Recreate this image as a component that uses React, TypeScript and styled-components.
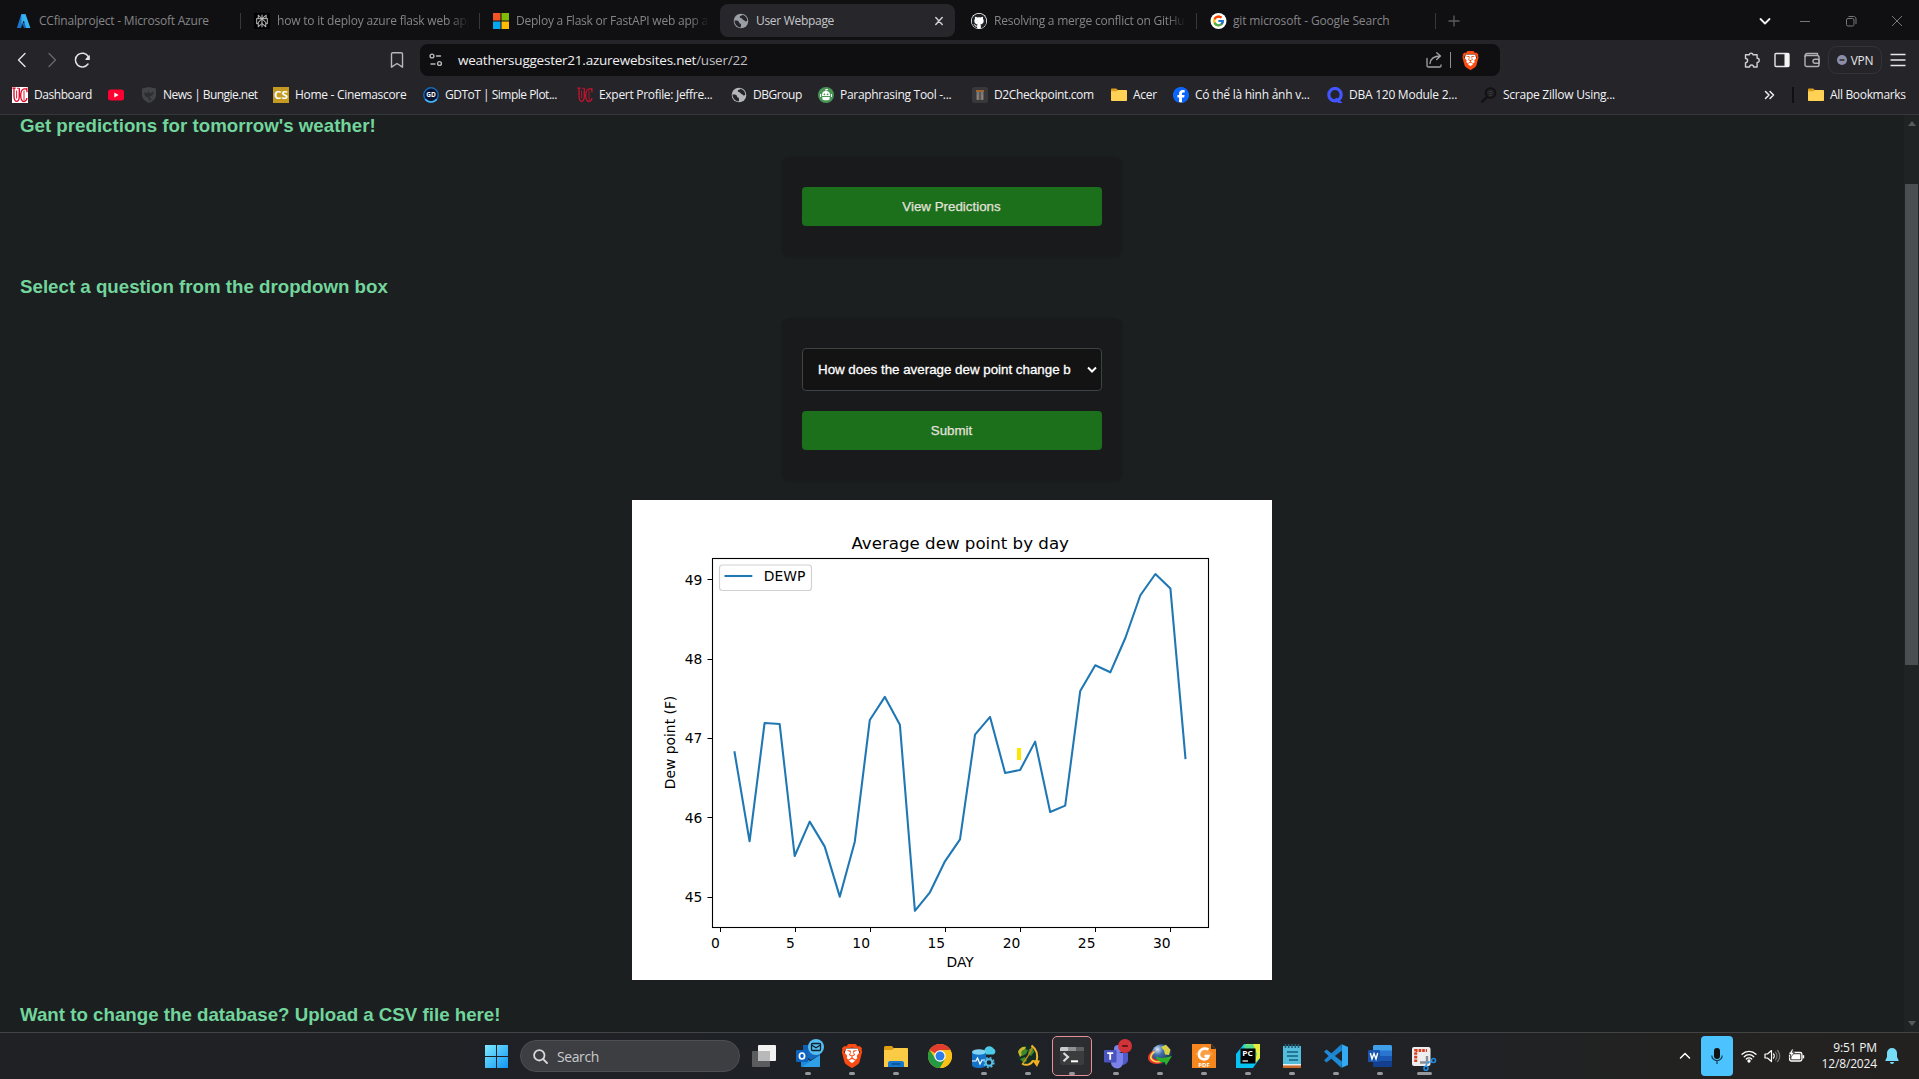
import React from 'react';
import styled, { createGlobalStyle } from 'styled-components';
import { SiBrave, SiGithub, SiFacebook, SiPerplexity } from 'react-icons/si';
import { FcGoogle } from 'react-icons/fc';

const UI = '"Open Sans", "Noto Sans", sans-serif';
const ARIAL = '"Liberation Sans", Arial, sans-serif';
const DEJAVU = '"DejaVu Sans", sans-serif';

const GlobalStyle = createGlobalStyle`
  * { box-sizing: border-box; }
  html, body { margin: 0; padding: 0; background: #1b1f20; overflow: hidden; }
  svg { display: block; flex: none; }
`;

const Screen = styled.div`
  width: 1919px;
  height: 1079px;
  display: flex;
  flex-direction: column;
  overflow: hidden;
  font-family: ${UI};
`;

/* ---------- tab strip ---------- */
const TabStrip = styled.div`
  height: 40px;
  flex: none;
  display: flex;
  align-items: center;
  background: #101012;
  padding: 1px 0 0 3px;
`;
const Tab = styled.div<{ $active?: boolean; $w: number; $pad?: number }>`
  width: ${(p) => p.$w}px;
  height: 33px;
  flex: none;
  display: flex;
  align-items: center;
  gap: 6px;
  padding: 0 10px 0 ${(p) => p.$pad || 13}px;
  border-radius: 8px;
  background: ${(p) => (p.$active ? '#26262b' : 'transparent')};
  color: ${(p) => (p.$active ? '#c6c6ca' : '#858588')};
`;
const TabTitle = styled.div<{ $ls: number; $fade?: boolean }>`
  flex: 1;
  min-width: 0;
  overflow: hidden;
  white-space: nowrap;
  font-size: 12px;
  line-height: 18px;
  letter-spacing: ${(p) => p.$ls}px;
  ${(p) => p.$fade && 'mask-image: linear-gradient(90deg, #000 90%, transparent);'}
`;
const TabLine = styled.div<{ $hidden?: boolean }>`
  width: 1px;
  height: 16px;
  flex: none;
  background: ${(p) => (p.$hidden ? 'transparent' : '#38383c')};
`;
const NewTab = styled.div`
  margin-left: 12px;
  flex: 1;
`;
const WindowButtons = styled.div`
  display: flex;
  align-items: center;
  gap: 14px;
  padding-right: 6px;
`;
const Favicon = styled.div`
  width: 17px;
  height: 16px;
  flex: none;
  display: flex;
  align-items: center;
`;
const CloseTab = styled.div`
  margin-right: 1px;
`;

/* ---------- toolbar ---------- */
const Toolbar = styled.div`
  height: 40px;
  flex: none;
  display: flex;
  align-items: center;
  background: #242429;
`;
const NavButtons = styled.div`
  width: 420px;
  display: flex;
  align-items: center;
  gap: 14px;
  padding: 0 15px 0 14px;
`;
const Grow = styled.div`
  flex: 1;
`;
const UrlBar = styled.div`
  width: 1080px;
  height: 32px;
  display: flex;
  align-items: center;
  border-radius: 8px;
  background: #0f0f11;
  padding: 0 20px 0 8px;
`;
const Url = styled.div`
  margin-left: 14px;
  flex: 1;
  font-size: 13.5px;
  letter-spacing: -0.23px;
  color: #f0f0f2;
  white-space: nowrap;
`;
const UrlPath = styled.span`
  color: #c0c0c4;
`;
const UrlDivider = styled.div`
  width: 1px;
  height: 16px;
  margin: 0 10px 0 7px;
  background: #8f8f92;
`;
const ToolbarRight = styled.div`
  flex: 1;
  display: flex;
  align-items: center;
  justify-content: flex-end;
  padding-right: 13px;
`;
const VpnPill = styled.div`
  width: 54px;
  height: 28px;
  margin: 0 8px;
  display: flex;
  align-items: center;
  justify-content: center;
  gap: 4px;
  border: 1px solid #33333a;
  border-radius: 9px;
  font-size: 12px;
  letter-spacing: -0.35px;
  color: #e8e8ea;
`;
const IconGap = styled.div<{ $w: number }>`
  width: ${(p) => p.$w}px;
  flex: none;
`;

/* ---------- bookmarks ---------- */
const BookmarkBar = styled.div`
  height: 35px;
  flex: none;
  display: flex;
  align-items: center;
  padding: 0 13px 4px 12px;
  background: #242429;
  border-bottom: 1px solid #36363b;
`;
const Bookmark = styled.div<{ $w?: number }>`
  width: ${(p) => (p.$w ? p.$w + 'px' : 'auto')};
  flex: none;
  display: flex;
  align-items: center;
  gap: 6px;
  color: #f2f2f4;
`;
const BookmarkText = styled.div<{ $ls: number }>`
  font-size: 12px;
  line-height: 18px;
  letter-spacing: ${(p) => p.$ls}px;
  white-space: nowrap;
`;
const BarDivider = styled.div`
  width: 2px;
  height: 16px;
  margin: 0 14px 0 17px;
  background: #101012;
`;

/* ---------- page ---------- */
const PageRow = styled.div`
  height: 917px;
  flex: none;
  display: flex;
  overflow: hidden;
`;
const Page = styled.main`
  width: 1904px;
  display: flex;
  flex-direction: column;
  align-items: center;
  background: #1b1f20;
  font-family: ${ARIAL};
`;
const Heading = styled.h3<{ $top: number; $bottom: number }>`
  width: 100%;
  margin: ${(p) => p.$top}px 0 ${(p) => p.$bottom}px;
  padding-left: 20px;
  font-size: 18.72px;
  line-height: 21px;
  font-weight: bold;
  color: #72d59c;
`;
const Card = styled.form<{ $h: number }>`
  width: 340px;
  height: ${(p) => p.$h}px;
  padding: 30px 20px;
  display: flex;
  flex-direction: column;
  gap: 20px;
  border-radius: 8px;
  background: #191a1c;
  box-shadow: 0 1px 3px rgba(0, 0, 0, 0.1);
`;
const GreenButton = styled.button`
  height: 39px;
  flex: none;
  border: 0;
  padding: 0 7px 0 6px;
  border-radius: 4px;
  background: #1c701c;
  color: #e4e2de;
  font: 13.33px ${ARIAL};
  -webkit-text-stroke: 0.25px currentColor;
`;
const SelectBox = styled.div`
  height: 43px;
  flex: none;
  display: flex;
  align-items: center;
  justify-content: space-between;
  padding: 0 3px 0 15px;
  border: 1px solid #3d4245;
  border-radius: 4px;
  background: #131313;
  color: #fff;
  font: 13.33px ${ARIAL};
  -webkit-text-stroke: 0.3px currentColor;
`;
const ChartImage = styled.div`
  width: 640px;
  height: 480px;
  flex: none;
  margin-top: 19px;
  background: #fff;
`;
const ScrollTrack = styled.div`
  width: 15px;
  display: flex;
  flex-direction: column;
  align-items: center;
  background: #202324;
`;
const ScrollThumb = styled.div`
  width: 13px;
  height: 481px;
  margin-top: 58px;
  background: #4a4e50;
`;
const ScrollArrow = styled.div<{ $down?: boolean }>`
  margin-top: ${(p) => (p.$down ? '356px' : '6px')};
  border-left: 4px solid transparent;
  border-right: 4px solid transparent;
  ${(p) => (p.$down ? 'border-top: 5px solid #57595b;' : 'border-bottom: 5px solid #57595b;')}
`;

/* ---------- taskbar ---------- */
const Taskbar = styled.div`
  height: 47px;
  flex: none;
  display: flex;
  border-top: 1px solid #424345;
  padding-left: 485px;
  background: linear-gradient(90deg, #202124 0%, #1e2126 45%, #202226 75%, #232220 90%, #222120 100%);
`;
const StartButton = styled.div`
  width: 35px;
  display: flex;
  align-items: center;
`;
const SearchPill = styled.div`
  width: 220px;
  height: 32px;
  margin-top: 7px;
  display: flex;
  align-items: center;
  gap: 9px;
  padding-left: 12px;
  border-radius: 16px;
  border: 1px solid #4d4e52;
  background: #3d3e42;
  color: #c9cacc;
  font-size: 14px;
  letter-spacing: -0.4px;
`;
const Apps = styled.div`
  display: flex;
  margin-left: 2px;
`;
const App44 = styled.div`
  width: 44px;
  height: 46px;
  display: flex;
  flex-direction: column;
  align-items: center;
`;
const AppTile = styled.div<{ $active?: boolean }>`
  position: relative;
  width: 40px;
  height: 40px;
  margin-top: 3px;
  flex: none;
  display: flex;
  justify-content: center;
  padding-top: ${(p) => (p.$active ? '7px' : '8px')};
  border-radius: 5px;
  border: ${(p) => (p.$active ? '1px solid #e88f9a' : '0')};
  background: ${(p) => (p.$active ? '#2c2d31' : 'transparent')};
`;
const RunningDot = styled.div<{ $wide?: boolean }>`
  width: ${(p) => (p.$wide ? 15 : 6)}px;
  height: 3px;
  margin-top: -4px;
  z-index: 1;
  border-radius: 2px;
  background: #98989b;
`;
const Badge = styled.div`
  position: absolute;
  top: 3px;
  right: 4px;
`;
const Tray = styled.div`
  flex: 1;
  display: flex;
  align-items: center;
  justify-content: flex-end;
  padding-right: 20px;
`;
const MicTile = styled.div`
  width: 32px;
  height: 40px;
  margin: 0 8px 0 10px;
  display: flex;
  align-items: center;
  justify-content: center;
  border-radius: 4px;
  background: #4cc2ff;
`;
const Clock = styled.div`
  width: 64px;
  margin: 0 8px 0 8px;
  text-align: right;
  font-size: 12px;
  line-height: 16px;
  letter-spacing: -0.15px;
  color: #f4f4f4;
  white-space: nowrap;
`;

/* ---------- favicons ---------- */
const AzureIcon = () => (
  <svg width="15" height="16" viewBox="0 0 24 24">
    <path d="M8.300 1h7L8 23H1.400L8.300 1z" fill="#1b74c4" />
    <path d="M9 15h9l3.500 8H13z" fill="#1467b8" />
    <path d="M8.600 1h6.800L23 23h-6.600L12.500 11 9 17z" fill="#37b2f0" />
  </svg>
);
const PerplexityTile = () => (
  <svg width="16" height="16" viewBox="0 0 16 16">
    <rect width="16" height="16" fill="#000" />
    <SiPerplexity x="1.500" y="1.500" size={13} color="#c4c4c4" strokeWidth="0.600" stroke="#c4c4c4" />
  </svg>
);
const MicrosoftIcon = () => (
  <svg width="16" height="16" viewBox="0 0 16 16">
    <path d="M0 0h7.500v7.500H0z" fill="#f35325" />
    <path d="M8.500 0H16v7.500H8.500z" fill="#81bc06" />
    <path d="M0 8.500h7.500V16H0z" fill="#05a6f0" />
    <path d="M8.500 8.500H16V16H8.500z" fill="#ffba08" />
  </svg>
);
const GlobeIcon = ({ color = '#9a9ea5', back = '#26262b' }: { color?: string; back?: string }) => (
  <svg width="16" height="16" viewBox="0 0 16 16">
    <circle cx="8" cy="8" r="7.300" fill={color} />
    <path d="M1.500 7.500c2 0 3.500 0 4.200.9.600.9.200 1.700 1.300 2 1 .200 1 .900 1 2.100 0 1.100-.300 1.800-.6 2C4 14 1.800 11.500 1.500 7.500z" fill={back} />
    <path d="M9.500 1.800C8.800 3 7.200 2.600 6.800 3.800c-.300 1.200.8 1.300 1.700 1.400 1 .1.700 1.500 1.900 1.700 1.300.2 1.300 1.500 2.400 1.500.6 0 1-.300 1.500-.600C14.300 5 12.500 2.600 9.500 1.800z" fill={back} />
  </svg>
);
const GithubIcon = () => (
  <svg width="16" height="16" viewBox="0 0 16 16">
    <circle cx="8" cy="8" r="8" fill="#fff" />
    <SiGithub x="0.600" y="0.600" size={14.800} color="#1d2127" />
  </svg>
);
const GoogleIcon = () => (
  <svg width="17" height="16" viewBox="0 0 16 16">
    <circle cx="8" cy="8" r="8" fill="#fff" />
    <FcGoogle x="1.500" y="1.500" size={13} />
  </svg>
);
const UcIcon = ({ boxed }: { boxed?: boolean }) => (
  <svg width="16" height="16" viewBox="0 0 16 16" fill="none" stroke={boxed ? '#e00122' : '#c5142f'}>
    {boxed && <rect width="16" height="16" fill="#fff" stroke="none" />}
    <path d="M.3 1.200h3.400M2 1.500v7c0 3.500.8 5.800 2.600 5.800C6.600 14.300 7.300 12 7.300 9V2" strokeWidth="1.300" />
    <path d="M5 1.200l3 .3M4.600 3.500v8" strokeWidth=".9" />
    <path d="M15 5.200l-.2-3.500c-1 1-2-.4-3.300.3C9.500 3 8.700 5.500 8.700 8.500c0 3.500 1.300 6 3.300 6 1.600 0 2.600-1.300 2.900-3.500" strokeWidth="1.300" />
    <path d="M12 3.500v9.500" strokeWidth=".9" />
  </svg>
);
const YoutubeIcon = () => (
  <svg width="16" height="16" viewBox="0 0 16 16">
    <rect x="0" y="2.500" width="16" height="11" rx="2.500" fill="#ff0033" />
    <path d="M6.300 5.600L10.600 8l-4.300 2.400z" fill="#fff" />
  </svg>
);
const BungieIcon = () => (
  <svg width="16" height="16" viewBox="0 0 16 16">
    <path d="M1 1.500L8 0l7 1.500v6.800c0 3.800-3.500 6.200-7 7.700-3.500-1.500-7-3.900-7-7.700z" fill="#424347" />
    <path d="M3 5l3 1.500L7.500 4 9 6.500 13 4.500 11.500 8 8 10l2.500 2L8 14l-.5-3L4 9z" fill="#2c2d31" />
  </svg>
);
const CsIcon = () => (
  <svg width="16" height="16" viewBox="0 0 16 16">
    <rect width="16" height="16" fill="#c49a23" />
    <text x="1" y="12.200" fontSize="11" fontWeight="700" fill="#fff" fontFamily={UI} textLength="14" lengthAdjust="spacingAndGlyphs">CS</text>
  </svg>
);
const GdIcon = () => (
  <svg width="16" height="16" viewBox="0 0 16 16">
    <circle cx="8" cy="8" r="7.200" fill="#0a1330" stroke="#1768b5" strokeWidth="1.500" />
    <path d="M2.300 12.300a7.300 7.300 0 0 0 11.400 0" fill="none" stroke="#49b4f5" strokeWidth="1.600" />
    <text x="8" y="10.400" fontSize="6.500" fontWeight="700" textAnchor="middle" fill="#fff" fontFamily={UI}>GD</text>
  </svg>
);
const RobotIcon = () => (
  <svg width="16" height="16" viewBox="0 0 16 16">
    <circle cx="8" cy="8" r="8" fill="#499557" />
    <path d="M8 4V2.500h2" stroke="#fff" strokeWidth="1.100" fill="none" />
    <path d="M4 8a4 4 0 0 1 8 0v1H4zM4.300 10h7.400v1.200a2 2 0 0 1-2 2H6.300a2 2 0 0 1-2-2z" fill="#fff" />
    <path d="M2.600 7v3M13.400 7v3" stroke="#fff" />
    <circle cx="6.400" cy="7.300" r=".9" fill="#499557" />
    <circle cx="9.600" cy="7.300" r=".9" fill="#499557" />
  </svg>
);
const D2Icon = () => (
  <svg width="16" height="16" viewBox="0 0 16 16">
    <rect width="16" height="16" rx="2.500" fill="#38383b" />
    <path d="M4 3h8v2H4z" fill="#a0642f" />
    <path d="M4.500 5h3v8h-3zM8.500 5h3v8h-3z" fill="#77797d" />
    <path d="M5 8h1v4H5zM10 8h1v4h-1z" fill="#b0825c" />
  </svg>
);
const FolderIcon = () => (
  <svg width="16" height="16" viewBox="0 0 16 16">
    <path d="M0 2.500c0-.6.400-1 1-1h4.300l1.500 1.600H14v4H0z" fill="#dd9d1e" />
    <path d="M0 4.200h5.500L7 3.100h8c.6 0 1 .4 1 1v9c0 .6-.4 1-1 1H1c-.6 0-1-.4-1-1z" fill="#ffd256" />
  </svg>
);
const FacebookIcon = () => (
  <svg width="16" height="16" viewBox="0 0 16 16">
    <circle cx="8" cy="8" r="7.500" fill="#fff" />
    <SiFacebook size={16} color="#0866ff" />
  </svg>
);
const QuizletIcon = () => (
  <svg width="16" height="16" viewBox="0 0 16 16">
    <circle cx="8" cy="7.700" r="6.200" fill="none" stroke="#4255ff" strokeWidth="3.200" />
    <path d="M9 10.500l6.800 5.500h-4.600L8 12z" fill="#4255ff" />
  </svg>
);
const ScrapeIcon = () => (
  <svg width="17" height="16" viewBox="0 0 17 16">
    <circle cx="10.500" cy="6" r="5" fill="#1f1f21" stroke="#111113" strokeWidth="1.600" />
    <path d="M7 10L1.500 15.300" stroke="#111113" strokeWidth="2.200" />
    <path d="M8.500 4.500h4M8.500 6.500h4M9 8.500h3" stroke="#39393c" strokeWidth=".9" />
  </svg>
);
const BraveLion = ({ size }: { size: number }) => (
  <svg width={size} height={size} viewBox="0 0 24 24">
    <path d="M6 4.500h12l1.500 6-3 8L12 22l-4.500-3.500-3-8z" fill="#fff" />
    <SiBrave size={24} color="#fb4b14" />
  </svg>
);

/* ---------- taskbar icons, drawn on a 24px grid ---------- */
const A = (p: { children: React.ReactNode; w?: number }) => (
  <svg width={p.w || 24} height="24" viewBox={`0 0 ${p.w || 24} 24`} overflow="visible">{p.children}</svg>
);
const StartIcon = () => (
  <svg width="23" height="23" viewBox="0 0 23 23">
    <defs>
      <linearGradient id="win" x1="0" y1="0" x2="23" y2="23" gradientUnits="userSpaceOnUse">
        <stop stopColor="#7eeaff" /><stop offset="1" stopColor="#0f96f5" />
      </linearGradient>
    </defs>
    <path fill="url(#win)" d="M0 0h11v11H0zM12 0h11v11H12zM0 12h11v11H0zM12 12h11v11H12z" />
  </svg>
);
const TaskViewIcon = () => (
  <A>
    <rect x="6" y="1" width="18" height="16" rx="1" fill="#f2f2f2" />
    <rect x="0" y="7" width="18" height="16" rx="1" fill="#5b5c5e" />
    <path d="M6 7h12v10H6z" fill="#b9b9ba" />
  </A>
);
const OutlookIcon = () => (
  <A>
    <path d="M7 1h10v10H7z" fill="#0f5fb0" />
    <path d="M5 11l9.500 6L24 11v11a1 1 0 0 1-1 1H6a1 1 0 0 1-1-1z" fill="#1b8be0" />
    <path d="M24 11v11a1 1 0 0 1-1 1H6z" fill="#2f9fe8" />
    <path d="M9 6h15v5l-9 5-6-4z" fill="#1469bd" />
    <rect x="0" y="6" width="12" height="12" rx="1" fill="#0d63bd" />
    <ellipse cx="6" cy="12" rx="2.600" ry="3" fill="none" stroke="#fff" strokeWidth="1.700" />
  </A>
);
const MailBadge = () => (
  <svg width="16" height="16" viewBox="0 0 16 16">
    <circle cx="8" cy="8" r="8" fill="#55bdf0" />
    <rect x="3.500" y="4.500" width="9" height="7" rx="1" fill="none" stroke="#11202a" strokeWidth="1.300" />
    <path d="M3.500 6l4.500 2.800L12.500 6" fill="none" stroke="#11202a" strokeWidth="1.300" />
  </svg>
);
const ExplorerIcon = () => (
  <A>
    <path d="M0 3.500C0 2.700.7 2 1.500 2H8l2 2.500V8H0z" fill="#e09c12" />
    <path d="M0 6h8l2-2h13c.6 0 1 .4 1 1v18H0z" fill="#fccb45" />
    <path d="M4 23v-4c0-1 .8-2 2-2h12c1.200 0 2 1 2 2v4z" fill="#1579cf" />
    <path d="M7.500 20h9" stroke="#0b4f92" strokeWidth="1.600" />
  </A>
);
const ChromeIcon = () => (
  <A>
    <circle cx="12" cy="12" r="12" fill="#fbc116" />
    <path d="M12 12L1.600 6A12 12 0 0 1 22.400 6H12z" fill="#e33b2e" />
    <path d="M1.600 6A12 12 0 0 0 12 24l5.200-9-5.200 1-5-2z" fill="#269a43" />
    <path d="M22.400 6H12v12l5.200-3L12 24A12 12 0 0 0 22.400 6z" fill="#fbc116" />
    <circle cx="12" cy="12" r="5.700" fill="#fff" />
    <circle cx="12" cy="12" r="4.500" fill="#2f7de9" />
  </A>
);
const StorageIcon = () => (
  <A>
    <path d="M14 10.500a4.500 4.500 0 0 1 0-7 5 5 0 0 1 7.500 1 3.300 3.300 0 0 1 0 6z" fill="#4ccbe8" />
    <path d="M0 8v13c0 1.700 3 3 7 3s7-1.300 7-3V8z" fill="#1373c8" />
    <ellipse cx="7" cy="8" rx="7" ry="2.800" fill="#7fd4f5" />
    <path d="M0 17h4l1.500-3 2.500 6 2-4h3" fill="none" stroke="#fff" strokeWidth="1.200" />
    <circle cx="17" cy="18.500" r="3.300" fill="#1f2226" stroke="#58c2ee" strokeWidth="2" />
    <circle cx="17" cy="18.500" r="4.900" fill="none" stroke="#58c2ee" strokeWidth="1.500" strokeDasharray="2 1.850" />
  </A>
);
const GlobeYellow = () => (
  <A>
    <circle cx="11" cy="11" r="10" fill="#122c26" />
    <path d="M2 8c1-4 5-6 8-5l-1 2.500-3 1.500 1 3-3 3z" fill="#c9b52c" />
    <path d="M5 8l4-3 3 1-2 4-4 2zM13 5l4-1 1 4-3 4-3-2zM4 15l5-2 2 4-3 2z" fill="#3d8a2a" />
    <path d="M16.500 1.500C15.500 9 11 13 7 19" fill="none" stroke="#c98c16" strokeWidth="1.500" />
    <path d="M15.500 1.500c5.500 4 6.500 10 5 16M6 19.500c4 2.500 9 1.500 11-3" fill="none" stroke="#f0b829" strokeWidth="2" />
    <path d="M16 16l8 .5L21 23z" fill="#f3b01e" />
  </A>
);
const TerminalIcon = () => (
  <A>
    <path d="M0 5a2 2 0 0 1 2-2h20a2 2 0 0 1 2 2v2H0z" fill="#8f9193" />
    <path d="M0 5a2 2 0 0 1 2-2h6v4H0z" fill="#c8c9ca" />
    <path d="M16 3h6a2 2 0 0 1 2 2v2h-8z" fill="#5c5e60" />
    <path d="M0 7h24v12a2 2 0 0 1-2 2H2a2 2 0 0 1-2-2z" fill="#3a3c3e" />
    <path d="M3.500 9l4.500 4-4.500 4.200" fill="none" stroke="#ddd" strokeWidth="2.200" />
    <path d="M11 17.300h7" stroke="#fff" strokeWidth="2" />
  </A>
);
const TeamsIcon = () => (
  <A>
    <circle cx="14" cy="5" r="4" fill="#7b83eb" />
    <path d="M15 9h9v7a5 5 0 0 1-7 4.500z" fill="#5059c9" />
    <path d="M7 9h12v9a6 6 0 0 1-12 1z" fill="#7b83eb" />
    <rect x="0" y="6" width="12.500" height="12.500" rx="1" fill="#4b53bc" />
    <path d="M3.200 9.200h6M6.200 9.200v6.600" stroke="#fff" strokeWidth="1.800" />
  </A>
);
const BusyBadge = () => (
  <svg width="14" height="14" viewBox="0 0 14 14">
    <circle cx="7" cy="7" r="7" fill="#d13438" />
    <path d="M4.200 7h5.600" stroke="#4a1012" strokeWidth="1.600" />
  </svg>
);
const IdmIcon = () => (
  <A>
    <defs>
      <radialGradient id="idm" cx=".3" cy=".25" r=".8">
        <stop stopColor="#dfe9f5" /><stop offset=".35" stopColor="#3f6fae" /><stop offset="1" stopColor="#12283f" />
      </radialGradient>
    </defs>
    <circle cx="13.500" cy="10.500" r="10.200" fill="url(#idm)" />
    <path d="M13 3l5-2.200 4.500 5L21 11l-4-.5-1-4z" fill="#d8d045" />
    <path d="M7 6C1 8-1.500 13 1 17c3 3.300 8 3.500 13 2v-4c-5 1.200-9.500.5-9.500-2.500 0-2.500 1-4.500 2.500-6.500z" fill="#e7382b" />
    <path d="M6.500 7.500c-4 3-5 6.500-2 8.700 2.500 2 7 1.800 9.500.8" fill="none" stroke="#f7e05a" strokeWidth="1.600" />
    <path d="M7.500 12.500c4 2 8 2 16.500-.5L18 21.500l-1.500-3.500c-4 1-7-1-9-5.500z" fill="#2fae2b" />
  </A>
);
const FoxitIcon = () => (
  <A>
    <path d="M0 0h19l5 5v19H0z" fill="#f6871f" />
    <path d="M19 0l5 5h-5z" fill="#2a2b2e" />
    <path d="M12 2l9 8-9 8-9-8z" fill="#fb9f45" />
    <path d="M16.500 5.500c-4-2.500-9.500 0-9.500 5 0 5.500 8.500 6.500 9.500 1.500h-4" fill="none" stroke="#fff" strokeWidth="2.500" />
    <text x="12" y="22.500" fontSize="6" fontWeight="700" textAnchor="middle" fill="#fff" fontFamily={UI}>PDF</text>
  </A>
);
const PycharmIcon = () => (
  <A>
    <path d="M0 10L8 0h16v14l-7 10H0z" fill="#07c3f2" />
    <path d="M10 0h14v14l-5 5z" fill="#e9ec3c" />
    <path d="M7 1l10-1 4 10-3 10z" fill="#57dc8e" />
    <rect x="4.500" y="4.500" width="15" height="15" fill="#000" />
    <text x="6.200" y="12" fontSize="7.500" fontWeight="700" fill="#fff" fontFamily={UI} textLength="10.500" lengthAdjust="spacingAndGlyphs">PC</text>
    <path d="M6.500 17h5.500" stroke="#fff" strokeWidth="1.200" />
  </A>
);
const NotepadIcon = () => (
  <A>
    <path d="M3 2h18v20H3z" fill="#54bddb" />
    <path d="M3 20.500h18V24H3z" fill="#c8692a" />
    <path d="M3 20h18v1.500H3z" fill="#e9eef0" />
    <path d="M5.500 0v4M8.700 0v4M12 0v4M15.300 0v4M18.500 0v4" stroke="#22607a" strokeWidth="1.500" />
    <path d="M7 8h11M7 12h11M9 16h9" stroke="#15607f" strokeWidth="1.400" />
  </A>
);
const VscodeIcon = () => (
  <A>
    <path d="M17.500 0L18 6.500 2.500 18.500 0 16.300z" fill="#1b83cf" />
    <path d="M17.500 24L18 17.500 2.500 5.500 0 7.700z" fill="#1f8ad6" />
    <path d="M17.200 0L24 3v18l-6.800 3c.5-.2.800-.6.800-1.200V1.300c0-.6-.3-1-.8-1.300z" fill="#32a9f2" />
  </A>
);
const WordIcon = () => (
  <A>
    <path d="M6 1h16.500c.8 0 1.500.7 1.500 1.500V7H5V2z" fill="#3f9fe8" />
    <path d="M5 6.500h19V12H5z" fill="#2a76cf" />
    <path d="M5 12h19v5.500H5z" fill="#1a57b5" />
    <path d="M5 17.500h19v4c0 .8-.7 1.500-1.500 1.500H6.500c-.8 0-1.500-.7-1.500-1.500z" fill="#123f8f" />
    <rect x="0" y="6" width="12" height="12" rx="1" fill="#1853ae" />
    <path d="M2.300 9l1.700 6 2-5.500L8 15l1.700-6" fill="none" stroke="#fff" strokeWidth="1.400" />
  </A>
);
const SnipIcon = () => (
  <A>
    <rect x="0" y="3" width="18.500" height="19" rx="2" fill="#eeeef0" />
    <path d="M3.700 18V6.500H15" fill="none" stroke="#d8401c" strokeWidth="3" strokeDasharray="2.600 1" />
    <path d="M15 12v7M8 18.500h9" fill="none" stroke="#8b8e94" strokeWidth="2.400" />
    <circle cx="21.500" cy="16.500" r="2" fill="#1f2226" stroke="#1c8be0" strokeWidth="1.600" />
    <circle cx="14" cy="24.300" r="2" fill="#1f2226" stroke="#1c8be0" strokeWidth="1.600" />
    <path d="M20 17.500l-5 1-1 4" fill="none" stroke="#4d9edb" strokeWidth="1.600" />
  </A>
);

/* ---------- chart ---------- */
const dewPoints = [
  46.826, 45.705, 47.195, 47.183, 45.52, 45.953, 45.638, 45.008, 45.7, 47.233, 47.523, 47.174, 44.83, 45.063, 45.453, 45.73,
  47.048, 47.271, 46.566, 46.603, 46.96, 46.075, 46.154, 47.598, 47.921, 47.833, 48.265, 48.803, 49.071, 48.887, 46.754,
];
const dayX = (d: number) => 87.52 + d * 15.03;
const dewY = (v: number) => 397.3 - (v - 45) * 79.42;

const DewPointChart = () => (
  <svg width="640" height="480" viewBox="0 0 640 480" fontFamily={DEJAVU} fontSize="13.890">
    <text x="328.200" y="48.700" fontSize="16.670" textAnchor="middle">Average dew point by day</text>
    {[0, 5, 10, 15, 20, 25, 30].map((d) => (
      <g key={d}>
        <path d={`M${Math.round(dayX(d)) + 0.5} 427v5`} stroke="#000" />
        <text x={dayX(d) + 0.2} y="448" textAnchor="end">{d}</text>
      </g>
    ))}
    {[45, 46, 47, 48, 49].map((v) => (
      <g key={v}>
        <path d={`M75.500 ${Math.round(dewY(v) - 0.5) + 0.5}h5`} stroke="#000" />
        <text x="70.300" y={dewY(v) + 4.9} textAnchor="end">{v}</text>
      </g>
    ))}
    <text x="328.200" y="466.500" textAnchor="middle">DAY</text>
    <text transform="translate(43 242.500) rotate(-90)" textAnchor="middle">Dew point (F)</text>
    <polyline
      points={dewPoints.map((v, i) => `${dayX(i + 1)},${dewY(v)}`).join(' ')}
      fill="none"
      stroke="#1f77b4"
      strokeWidth="2.080"
      strokeLinejoin="round"
      strokeLinecap="square"
    />
    <rect x="80.500" y="58.500" width="496" height="369" fill="none" stroke="#000" strokeWidth="1.100" />
    <rect x="87.500" y="65" width="92" height="25.500" rx="3" fill="#fff" stroke="#d2d2d2" strokeWidth="1.200" />
    <path d="M92.500 76h27.800" stroke="#1f77b4" strokeWidth="2.080" />
    <text x="131.800" y="81">DEWP</text>
    <rect x="385" y="248" width="4" height="12" fill="#ffe600" />
  </svg>
);

/* ---------- data ---------- */
const tabs = [
  { icon: <AzureIcon />, title: 'CCfinalproject - Microsoft Azure', ls: -0.22, w: 237 },
  { icon: <PerplexityTile />, title: 'how to it deploy azure flask web app', ls: -0.2, w: 238, fade: true },
  { icon: <MicrosoftIcon />, title: 'Deploy a Flask or FastAPI web app a', ls: -0.23, w: 239, fade: true, noLine: true },
  { icon: <GlobeIcon />, title: 'User Webpage', ls: -0.3, w: 235, active: true, noLine: true },
  { icon: <GithubIcon />, title: 'Resolving a merge conflict on GitHub', ls: -0.23, w: 240, pad: 15, fade: true },
  { icon: <GoogleIcon />, title: 'git microsoft - Google Search', ls: -0.15, w: 238 },
];
const bookmarks = [
  { icon: <UcIcon boxed />, text: 'Dashboard', w: 96, ls: -0.45 },
  { icon: <YoutubeIcon />, text: '', w: 33, ls: 0 },
  { icon: <BungieIcon />, text: 'News | Bungie.net', w: 132, ls: -0.55 },
  { icon: <CsIcon />, text: 'Home - Cinemascore', w: 150, ls: -0.3 },
  { icon: <GdIcon />, text: 'GDToT | Simple Plot...', w: 154, ls: -0.5 },
  { icon: <UcIcon />, text: 'Expert Profile: Jeffre...', w: 154, ls: -0.3 },
  { icon: <GlobeIcon color="#b4b6ba" back="#242429" />, text: 'DBGroup', w: 87, ls: -0.45 },
  { icon: <RobotIcon />, text: 'Paraphrasing Tool -...', w: 154, ls: -0.3 },
  { icon: <D2Icon />, text: 'D2Checkpoint.com', w: 139, ls: -0.38 },
  { icon: <FolderIcon />, text: 'Acer', w: 62, ls: -0.3 },
  { icon: <FacebookIcon />, text: 'Có thể là hình ảnh v...', w: 154, ls: -0.25 },
  { icon: <QuizletIcon />, text: 'DBA 120 Module 2...', w: 153, ls: -0.25 },
  { icon: <ScrapeIcon />, text: 'Scrape Zillow Using...', w: 154, ls: -0.25 },
];
const apps = [
  { icon: <TaskViewIcon />, idle: true },
  { icon: <OutlookIcon />, badge: <MailBadge /> },
  { icon: <BraveLion size={24} /> },
  { icon: <ExplorerIcon /> },
  { icon: <ChromeIcon />, idle: true },
  { icon: <StorageIcon /> },
  { icon: <GlobeYellow /> },
  { icon: <TerminalIcon />, active: true },
  { icon: <TeamsIcon />, badge: <BusyBadge /> },
  { icon: <IdmIcon /> },
  { icon: <FoxitIcon /> },
  { icon: <PycharmIcon /> },
  { icon: <NotepadIcon /> },
  { icon: <VscodeIcon /> },
  { icon: <WordIcon /> },
  { icon: <SnipIcon />, wide: true },
] as { icon: React.ReactNode; badge?: React.ReactNode; idle?: boolean; active?: boolean; wide?: boolean }[];

const line = { fill: 'none', strokeLinecap: 'round', strokeLinejoin: 'round' } as const;

export default function App() {
  return (
    <Screen>
      <GlobalStyle />
      <TabStrip>
        {tabs.map((t, i) => (
          <React.Fragment key={i}>
            <Tab $w={t.w} $active={t.active} $pad={t.pad}>
              <Favicon>{t.icon}</Favicon>
              <TabTitle $ls={t.ls} $fade={t.fade}>{t.title}</TabTitle>
              {t.active && (
                <CloseTab>
                  <svg width="10" height="10" viewBox="0 0 10 10" {...line} stroke="#d0d0d4" strokeWidth="1.500">
                    <path d="M1.800 1.500l6.400 7M8.200 1.500l-6.400 7" />
                  </svg>
                </CloseTab>
              )}
            </Tab>
            <TabLine $hidden={t.noLine} />
          </React.Fragment>
        ))}
        <NewTab>
          <svg width="12" height="12" viewBox="0 0 12 12" stroke="#5c5c60" strokeWidth="1.300"><path d="M6 .5v11M.5 6h11" /></svg>
        </NewTab>
        <WindowButtons>
          <svg width="20" height="12" viewBox="0 0 20 12" {...line} stroke="#f2f2f2" strokeWidth="1.800"><path d="M5.500 4l4.500 4.500L14.500 4" /></svg>
          <svg width="32" height="12" viewBox="0 0 32 12" stroke="#77777a"><path d="M11 6.500h10" /></svg>
          <svg width="32" height="12" viewBox="0 0 32 12" fill="none" stroke="#77777a">
            <rect x="11.500" y="3.500" width="7.500" height="7.500" rx="1.500" />
            <path d="M13.500 1.500h5c1.500 0 2.500.8 2.500 2.500v5" />
          </svg>
          <svg width="32" height="12" viewBox="0 0 32 12" stroke="#77777a"><path d="M11 1l10 10M21 1L11 11" /></svg>
        </WindowButtons>
      </TabStrip>

      <Toolbar>
        <NavButtons>
          <svg width="16" height="16" viewBox="0 0 16 16" {...line} stroke="#e4e4e6" strokeWidth="1.400"><path d="M11 1.500L4.500 8l6.500 6.500" /></svg>
          <svg width="16" height="16" viewBox="0 0 16 16" {...line} stroke="#66666b" strokeWidth="1.400"><path d="M5 1.500L11.500 8 5 14.500" /></svg>
          <svg width="17" height="16" viewBox="0 0 17 16" {...line} stroke="#e4e4e6" strokeWidth="1.500">
            <path d="M14.300 4.600A6.900 6.900 0 1 0 14 12" />
            <path d="M15.200 3.800v3.700h-3.200z" fill="#e4e4e6" strokeWidth="1.200" />
          </svg>
          <Grow />
          <svg width="16" height="16" viewBox="0 0 16 16" {...line} stroke="#b8b8bc" strokeWidth="1.400"><path d="M2.500 2a1.300 1.300 0 0 1 1.300-1.300h8.400A1.300 1.300 0 0 1 13.500 2v13.200L8 11.500l-5.500 3.700z" /></svg>
        </NavButtons>
        <UrlBar>
          <svg width="16" height="16" viewBox="0 0 16 16" {...line} stroke="#b8b8bc" strokeWidth="1.400">
            <circle cx="4" cy="4" r="1.900" /><path d="M8.500 4h4M3 12h4" /><circle cx="11.500" cy="11.500" r="1.900" />
          </svg>
          <Url>weathersuggester21.azurewebsites.net<UrlPath>/user/22</UrlPath></Url>
          <svg width="18" height="16" viewBox="0 0 18 16" {...line} stroke="#a4a4a8" strokeWidth="1.300">
            <path d="M2 6.500v7.200a1.300 1.300 0 0 0 1.300 1.300h11.400a1.300 1.300 0 0 0 1.300-1.300v-.7" />
            <path d="M5 11.500c.5-4.500 3.200-7.500 10.500-7.500M11.700.8L15.500 4l-3.800 3.500" />
          </svg>
          <UrlDivider />
          <BraveLion size={19} />
        </UrlBar>
        <ToolbarRight>
          <svg width="16" height="16" viewBox="0 0 16 16" {...line} stroke="#cfcfd2" strokeWidth="1.400">
            <path d="M1.500 2.800h3.700a2 2 0 0 1 3.900 0h4v3.500a2 2 0 0 1 0 4.200v4.500H9.600a2 2 0 0 0-4 0H1.500v-4.300a2.100 2.100 0 0 0 0-4.200z" />
          </svg>
          <IconGap $w={14} />
          <svg width="16" height="16" viewBox="0 0 16 16"><rect x="1" y="1.500" width="14" height="13" rx="1" fill="none" stroke="#e8e8ea" strokeWidth="1.400" /><path d="M10.500 1H15v14h-4.500z" fill="#f4f4f4" /></svg>
          <IconGap $w={14} />
          <svg width="16" height="16" viewBox="0 0 16 16" {...line} stroke="#b0b0b4" strokeWidth="1.400">
            <rect x="1" y="3.500" width="14" height="11" rx="1.800" /><path d="M1 4.500C1 2.500 2 1.500 3.500 1.500h10v2M15 7.200h-4a2 2 0 0 0 0 4h4z" />
          </svg>
          <VpnPill>
            <svg width="10" height="10" viewBox="0 0 10 10"><circle cx="5" cy="5" r="5" fill="#8c8ea8" /><path d="M2.500 5h5" stroke="#28282d" strokeWidth="1.500" /></svg>
            VPN
          </VpnPill>
          <svg width="16" height="16" viewBox="0 0 16 16" stroke="#e8e8ea" strokeWidth="1.300"><path d="M.5 2.500h15M.5 8h15M.5 13.500h15" /></svg>
        </ToolbarRight>
      </Toolbar>

      <BookmarkBar>
        {bookmarks.map((b, i) => (
          <Bookmark key={i} $w={b.w}>
            {b.icon}
            <BookmarkText $ls={b.ls}>{b.text}</BookmarkText>
          </Bookmark>
        ))}
        <Grow />
        <svg width="11" height="10" viewBox="0 0 11 10" {...line} stroke="#f0f0f2" strokeWidth="1.500"><path d="M1.500 1.500L5 5 1.500 8.500M6 1.500L9.500 5 6 8.500" /></svg>
        <BarDivider />
        <Bookmark $w={98}>
          <FolderIcon />
          <BookmarkText $ls={-0.33}>All Bookmarks</BookmarkText>
        </Bookmark>
      </BookmarkBar>

      <PageRow>
        <Page>
          <Heading $top={0} $bottom={21}>Get predictions for tomorrow's weather!</Heading>
          <Card $h={100}><GreenButton type="button">View Predictions</GreenButton></Card>
          <Heading $top={19} $bottom={21}>Select a question from the dropdown box</Heading>
          <Card $h={163}>
            <SelectBox>
              How does the average dew point change b
              <svg width="12" height="10" viewBox="0 0 12 10" fill="none" stroke="#fff" strokeWidth="2"><path d="M2 2.500l4 4 4-4" /></svg>
            </SelectBox>
            <GreenButton type="button">Submit</GreenButton>
          </Card>
          <ChartImage><DewPointChart /></ChartImage>
          <Heading $top={24} $bottom={0}>Want to change the database? Upload a CSV file here!</Heading>
        </Page>
        <ScrollTrack>
          <ScrollArrow />
          <ScrollThumb />
          <ScrollArrow $down />
        </ScrollTrack>
      </PageRow>

      <Taskbar>
        <StartButton><StartIcon /></StartButton>
        <SearchPill>
          <svg width="15" height="15" viewBox="0 0 15 15" {...line} stroke="#d8d8da" strokeWidth="1.800"><circle cx="6.300" cy="6.300" r="5.200" /><path d="M10.200 10.200l3.800 3.800" /></svg>
          Search
        </SearchPill>
        <Apps>
          {apps.map((a, i) => (
            <App44 key={i}>
              <AppTile $active={a.active}>
                {a.icon}
                {a.badge && <Badge>{a.badge}</Badge>}
              </AppTile>
              {!a.idle && <RunningDot $wide={a.wide} />}
            </App44>
          ))}
        </Apps>
        <Tray>
          <svg width="12" height="10" viewBox="0 0 12 10" {...line} stroke="#fff" strokeWidth="1.500"><path d="M1.500 7L6 2.500 10.500 7" /></svg>
          <MicTile>
            <svg width="14" height="18" viewBox="0 0 14 18">
              <rect x="4" y="1" width="6" height="11" rx="3" fill="#111" />
              <path d="M1.800 8.500a5.200 5.200 0 0 0 10.400 0M7 13.700V17" fill="none" stroke="#17384a" strokeWidth="1.200" />
            </svg>
          </MicTile>
          <svg width="16" height="14" viewBox="0 0 16 14" {...line} stroke="#fff" strokeWidth="1.300">
            <path d="M1 5.300a10 10 0 0 1 14 0M3.200 7.700a6.800 6.800 0 0 1 9.600 0M5.300 10a3.800 3.800 0 0 1 5.400 0" /><circle cx="8" cy="12" r="1" fill="#fff" />
          </svg>
          <IconGap $w={7} />
          <svg width="17" height="14" viewBox="0 0 17 14" {...line} strokeWidth="1.200">
            <path d="M1 5v4h2.500L7.500 12.500V1.500L3.500 5z" stroke="#fff" /><path d="M9.500 5c1 1 1 3 0 4" stroke="#fff" />
            <path d="M11.500 3.200c2 2 2 5.600 0 7.600M13.500 1.500c3 3 3 8 0 11" stroke="#77787a" />
          </svg>
          <IconGap $w={7} />
          <svg width="17" height="14" viewBox="0 0 17 14">
            <rect x="1.600" y="3.500" width="12.300" height="8.500" rx="1.800" fill="none" stroke="#fff" strokeWidth="1.300" />
            <rect x="3.300" y="5.200" width="9" height="5.200" fill="#fff" /><path d="M14.500 6.200h1.700v3.200h-1.700z" fill="#fff" />
            <path d="M4 0L.5 5.500h2.200L2 9l4.500-5.500H4.300L5.500 0z" fill="#fff" stroke="#222" strokeWidth=".7" />
          </svg>
          <Clock>9:51 PM<br />12/8/2024</Clock>
          <svg width="14" height="16" viewBox="0 0 14 16" fill="#76dcf8"><path d="M7 0a5 5 0 0 1 5 5v4l1.600 3.200c.2.400 0 .8-.500.800H.9c-.5 0-.7-.4-.5-.8L2 9V5a5 5 0 0 1 5-5zM5 14h4a2 2 0 0 1-4 0z" /></svg>
        </Tray>
      </Taskbar>
    </Screen>
  );
}
